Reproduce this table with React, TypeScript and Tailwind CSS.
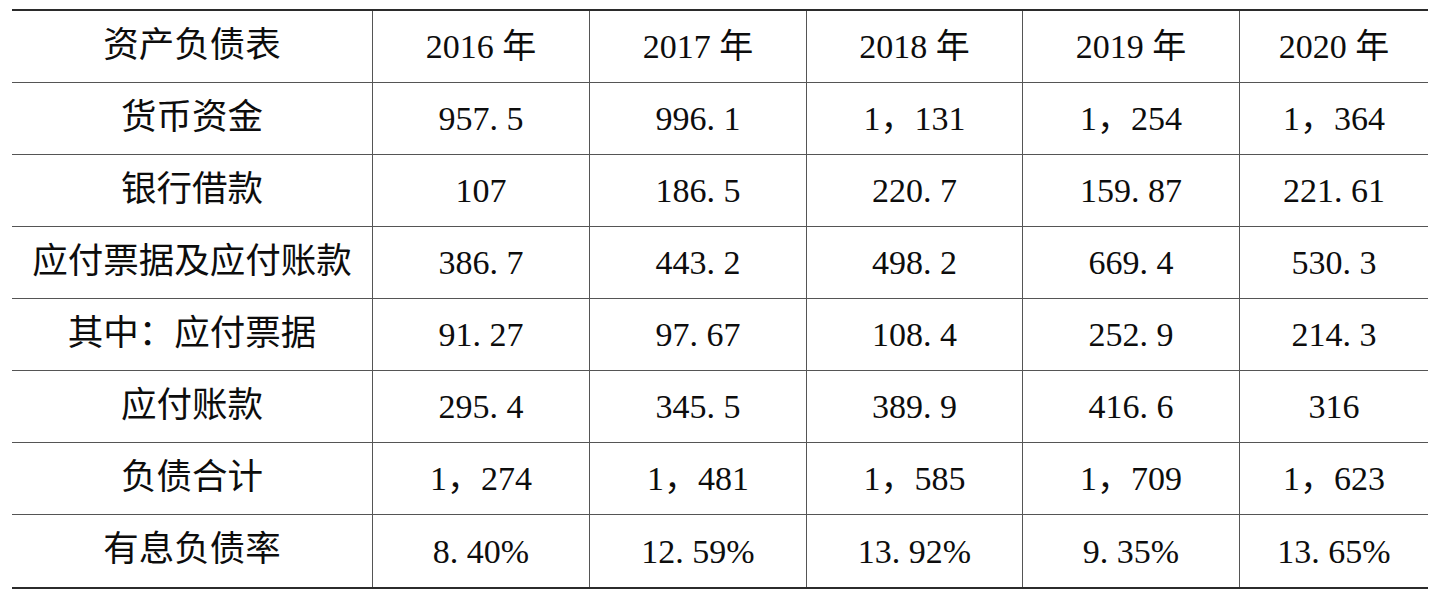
import React from 'react';

const widths = ['w-[360px]', 'w-[217px]', 'w-[217px]', 'w-[216px]', 'w-[217px]', 'w-[189px]'];

const rows: string[][] = [
  ['资产负债表', '2016 年', '2017 年', '2018 年', '2019 年', '2020 年'],
  ['货币资金', '957. 5', '996. 1', '1，131', '1，254', '1，364'],
  ['银行借款', '107', '186. 5', '220. 7', '159. 87', '221. 61'],
  ['应付票据及应付账款', '386. 7', '443. 2', '498. 2', '669. 4', '530. 3'],
  ['其中：应付票据', '91. 27', '97. 67', '108. 4', '252. 9', '214. 3'],
  ['应付账款', '295. 4', '345. 5', '389. 9', '416. 6', '316'],
  ['负债合计', '1，274', '1，481', '1，585', '1，709', '1，623'],
  ['有息负债率', '8. 40%', '12. 59%', '13. 92%', '9. 35%', '13. 65%'],
];

const App: React.FC = () => {
  return (
    <div className="w-[1437px] h-[600px] bg-white pt-[9px] pl-[12px]">
      <div className="w-[1416px] border-t-2 border-b-2 border-[#2b2b2b] font-['Liberation_Serif','Noto_Sans_CJK_SC',serif] text-[34px] text-[#0d0d0d]">
        {rows.map((row, i) => (
          <div
            key={i}
            className={`flex h-[72px] ${i < rows.length - 1 ? 'border-b border-[#555555]' : ''}`}
          >
            {row.map((cell, j) => (
              <div
                key={j}
                className={`${widths[j]} shrink-0 flex items-center justify-center whitespace-nowrap ${j > 0 ? 'border-l border-[#555555]' : 'text-[35.5px] pb-[2px]'}`}
              >
                {cell}
              </div>
            ))}
          </div>
        ))}
      </div>
    </div>
  );
};

export default App;
